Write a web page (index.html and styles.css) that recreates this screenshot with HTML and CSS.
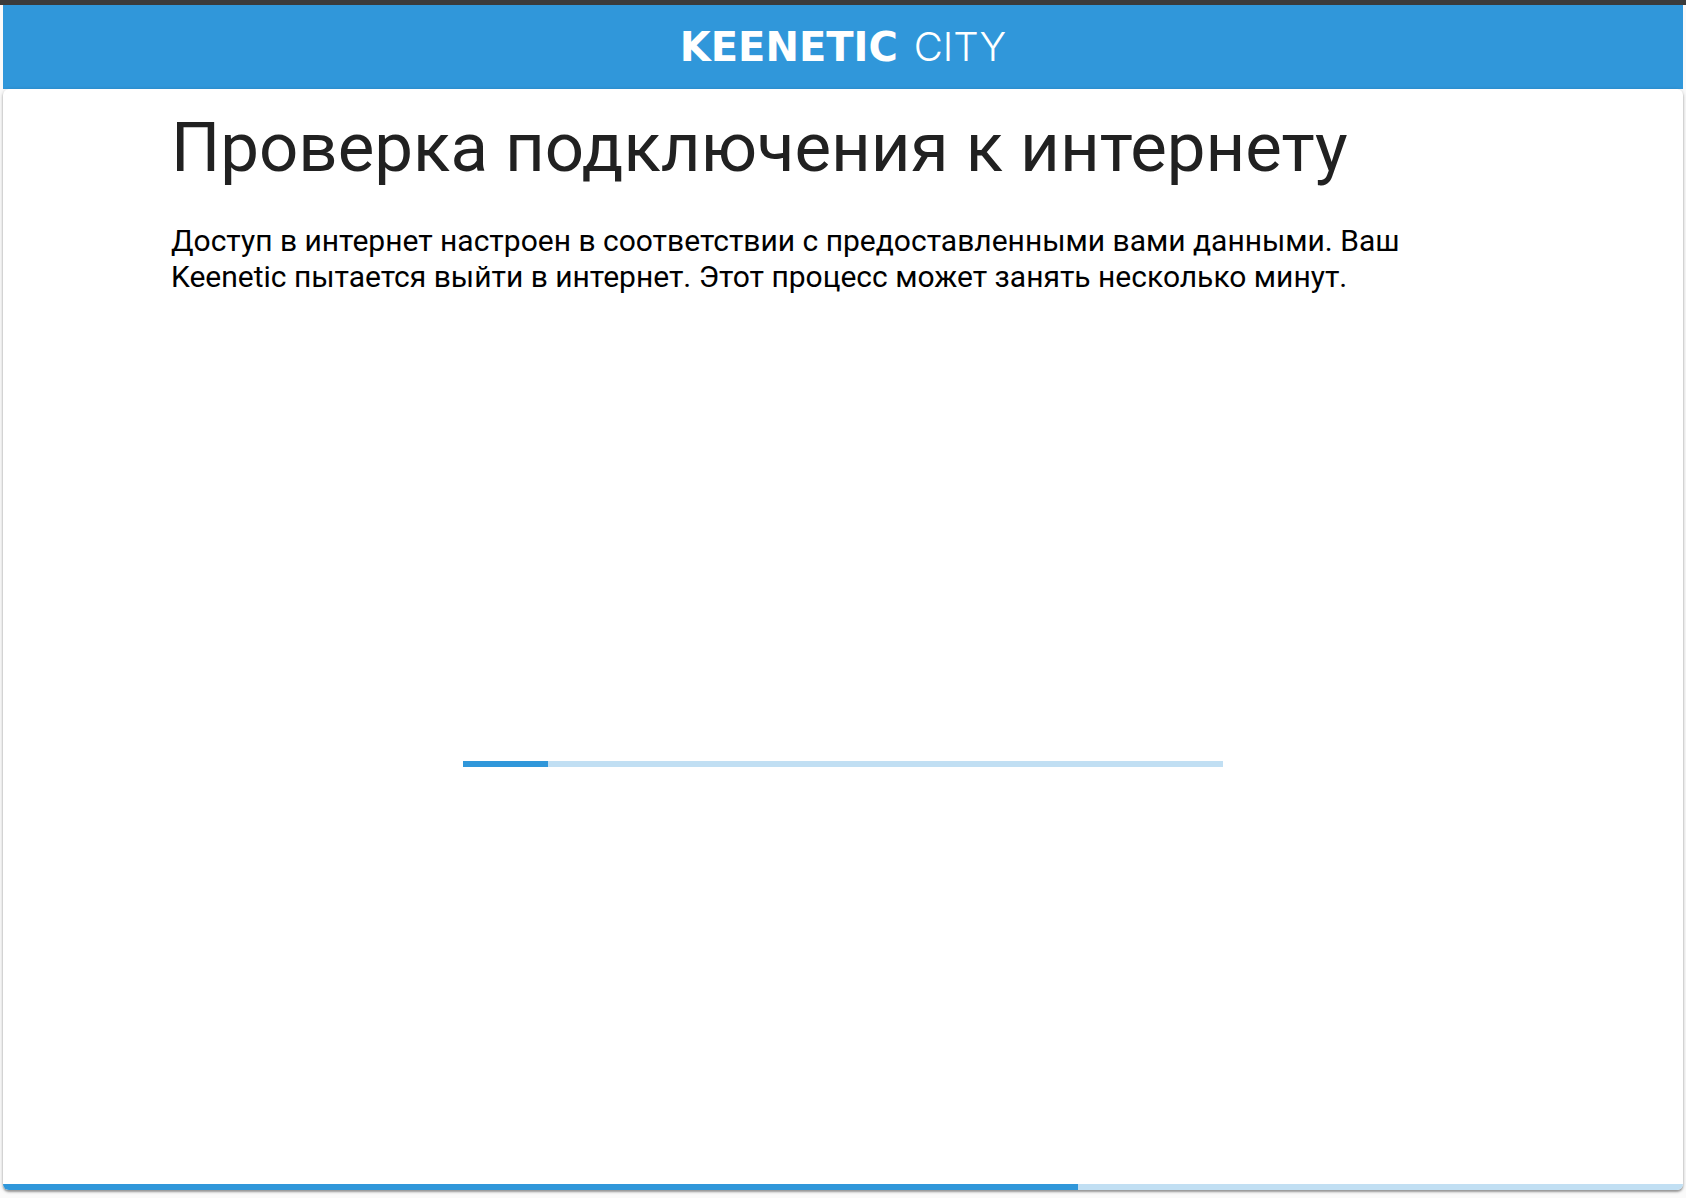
FILE: index.html
```html
<!DOCTYPE html>
<html lang="ru">
<head>
<meta charset="utf-8">
<meta name="viewport" content="width=device-width, initial-scale=1">
<title>Keenetic City</title>
<link rel="stylesheet" href="styles.css">
</head>
<body>
<div class="wizard">
  <header class="header">
    <div class="brand"><span class="brand-name">KEENETIC</span><span class="brand-model">CITY</span></div>
  </header>
  <main class="card">
    <div class="content">
      <h1 class="title">Проверка подключения к интернету</h1>
      <p class="description">Доступ в интернет настроен в соответствии с предоставленными вами данными. Ваш Keenetic пытается выйти в интернет. Этот процесс может занять несколько минут.</p>
    </div>
    <div class="waiting">
      <progress class="bar bar-check" aria-label="Проверка подключения" max="1000" value="111"></progress>
    </div>
    <progress class="bar bar-steps" aria-label="Ход настройки" max="100" value="64"></progress>
  </main>
</div>
</body>
</html>
```

FILE: styles.css
```css
* {
  box-sizing: border-box;
}

body {
  margin: 0;
  background: #fafafa;
  color: #000;
  font-family: Roboto, "Noto Sans", sans-serif;
}

.wizard {
  display: flex;
  flex-direction: column;
  min-height: 100vh;
  padding: 0 3px 8px;
  border-top: 5px solid #3b3b3b;
}

.header {
  display: flex;
  align-items: center;
  justify-content: center;
  height: 84px;
  background: #3097da;
  color: #fff;
}

.brand {
  display: flex;
  align-items: baseline;
  gap: 16px;
  font-size: 40px;
  line-height: 48px;
}

.brand-name {
  font-family: "DejaVu Sans", sans-serif;
  font-weight: 700;
}

.brand-model {
  font-family: Inter, sans-serif;
  font-weight: 300;
}

.card {
  display: flex;
  flex: 1;
  flex-direction: column;
  overflow: hidden;
  border-radius: 6px;
  background: #fff;
  box-shadow: 0 1px 4px rgba(0, 0, 0, 0.2), 0 2px 2px rgba(0, 0, 0, 0.3);
}

.content {
  padding: 20px 10% 0;
}

.title {
  margin: 0 0 36px;
  color: #212121;
  font-size: 69px;
  font-weight: 400;
  line-height: 78px;
}

.description {
  margin: 0;
  font-size: 30px;
  line-height: 36px;
}

.waiting {
  display: flex;
  flex: 1;
  align-items: center;
  justify-content: center;
  padding-top: 48px;
}

.bar {
  appearance: none;
  display: block;
  height: 6px;
  border: 0;
  background: #c1dff3;
}

.bar::-webkit-progress-bar {
  background: #c1dff3;
}

.bar::-webkit-progress-value {
  background: #3097da;
}

.bar::-moz-progress-bar {
  background: #3097da;
}

.bar-check {
  width: 45.2%;
}

.bar-steps {
  width: 100%;
}
```
